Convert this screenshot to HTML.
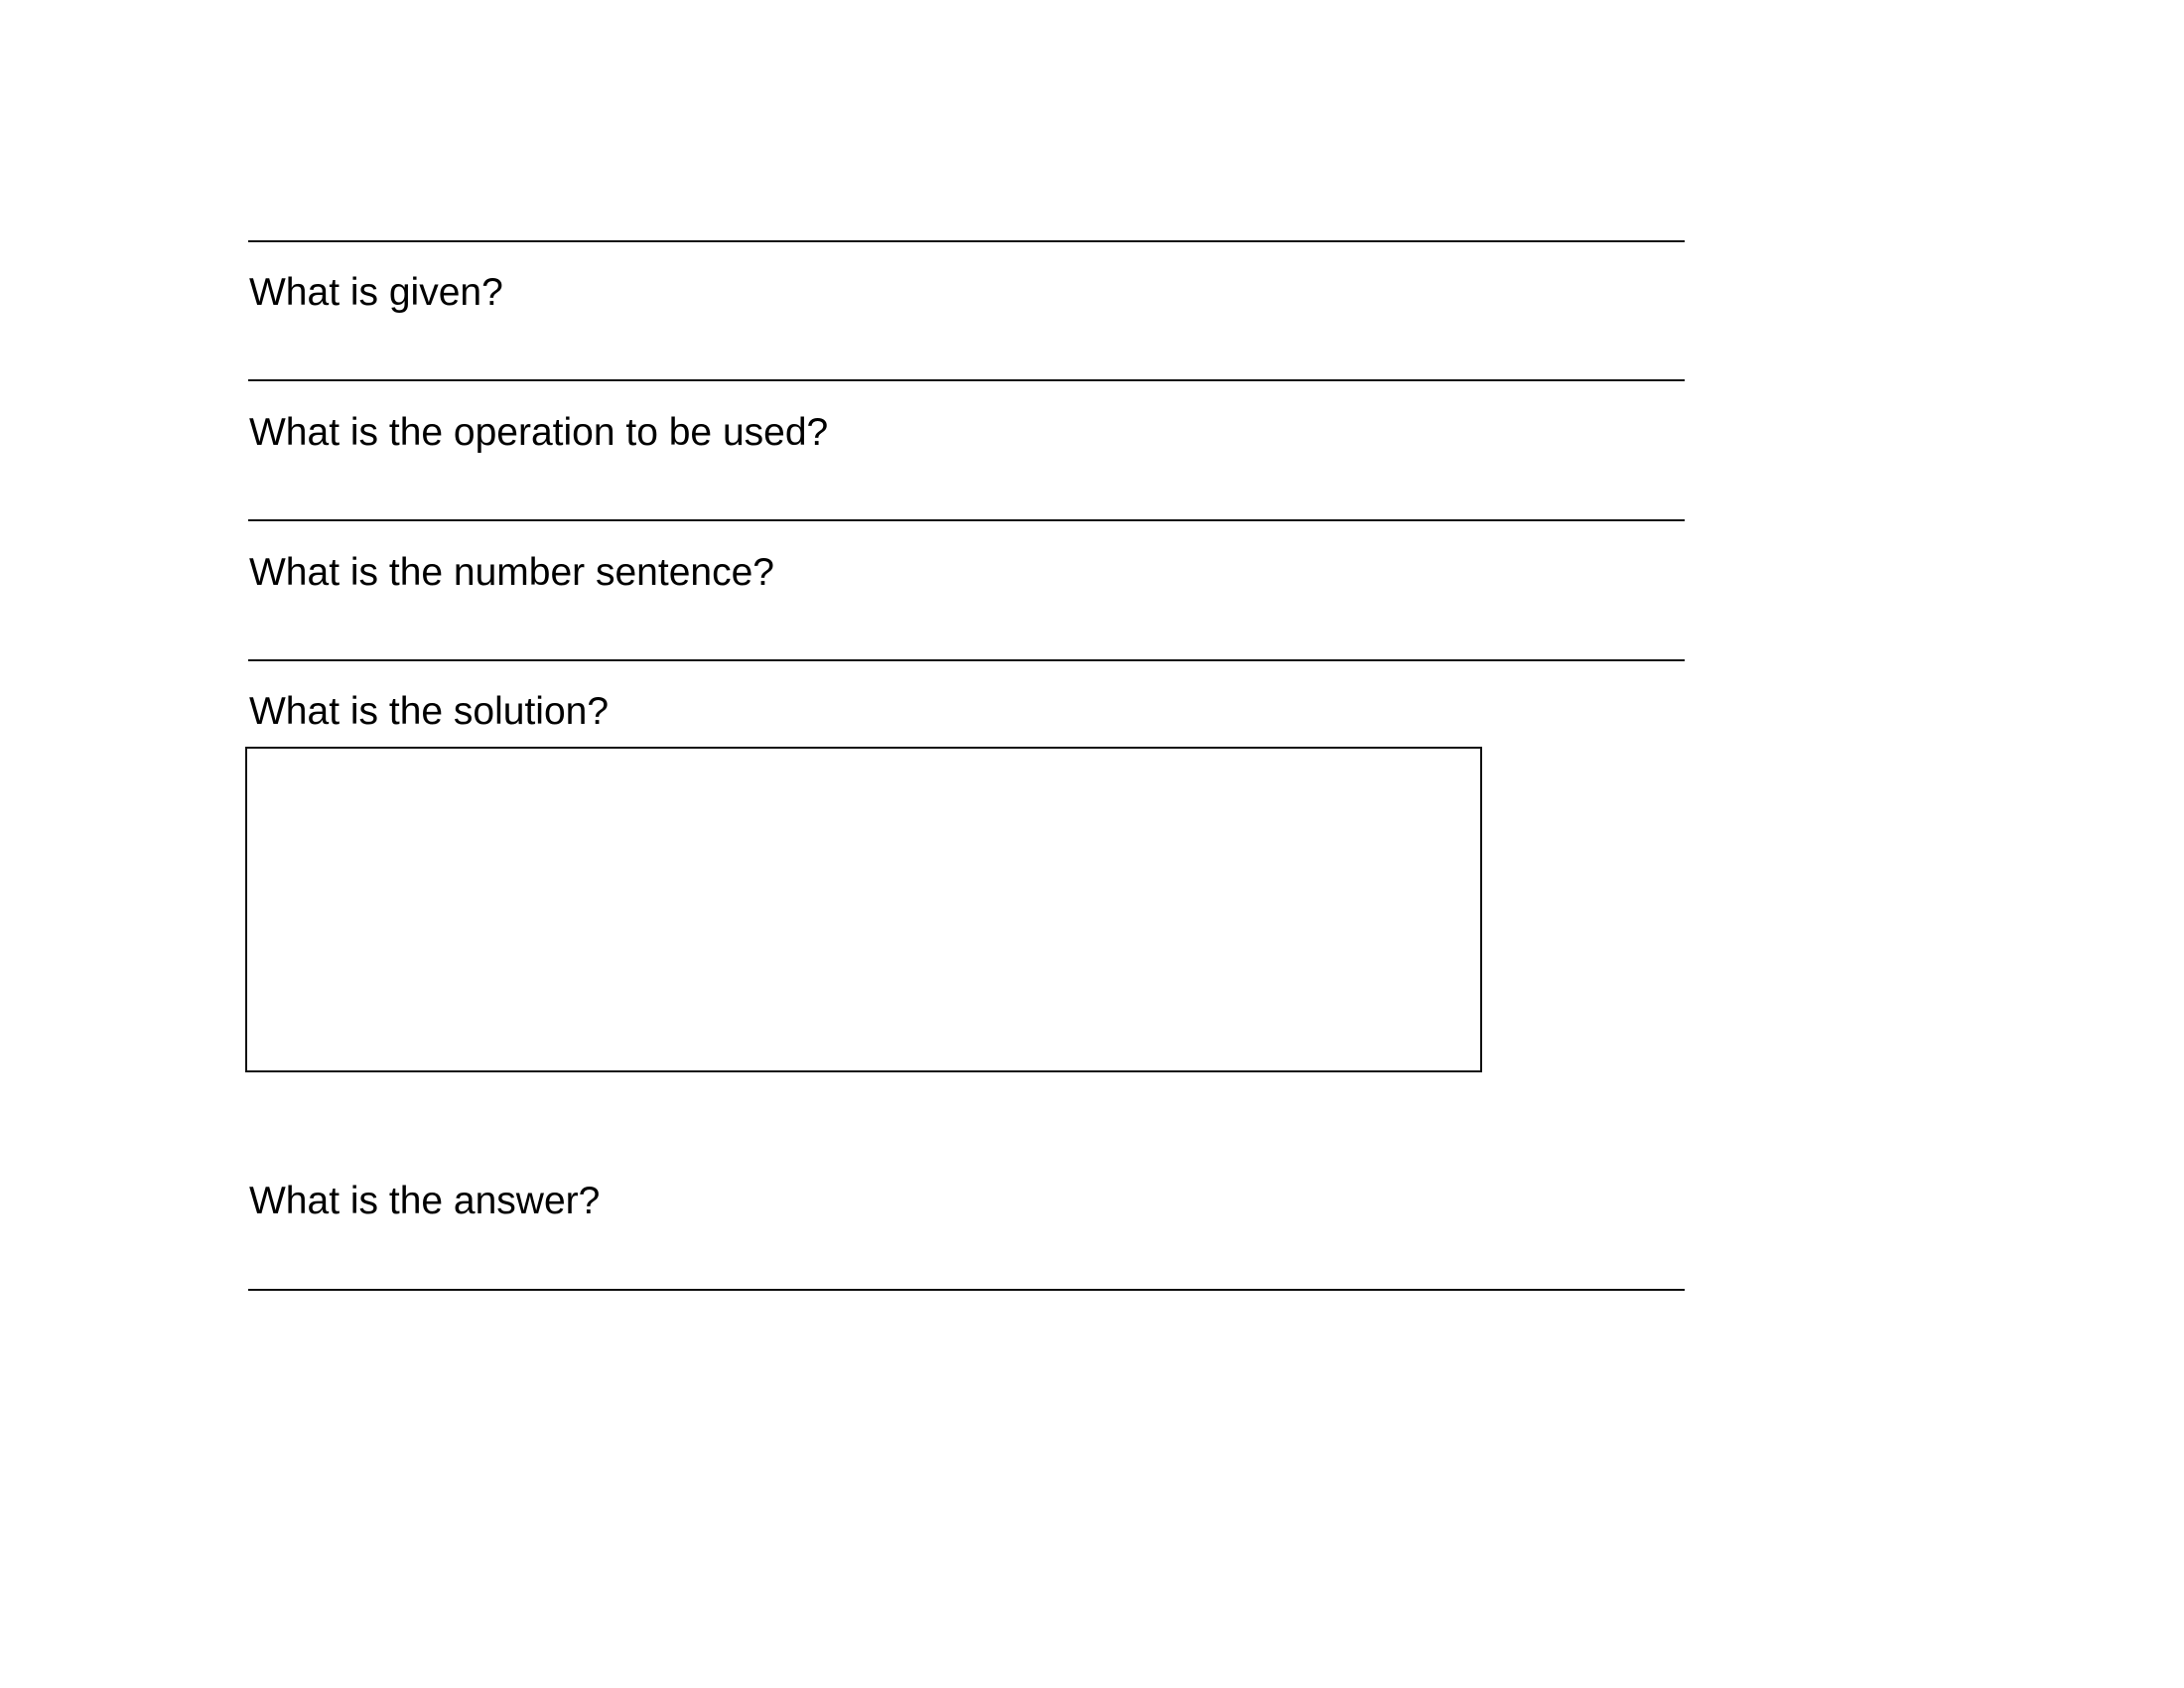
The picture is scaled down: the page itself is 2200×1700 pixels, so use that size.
<!DOCTYPE html>
<html><head><style>
html,body{margin:0;padding:0;background:#fff;width:2200px;height:1700px;overflow:hidden;}
.l{position:absolute;left:250px;width:1447px;height:2px;background:#111;}
.t{position:absolute;left:251px;font-family:"Liberation Sans",Arial,sans-serif;font-size:39px;line-height:39px;color:#000;white-space:nowrap;}
.box{position:absolute;left:247px;top:752px;width:1242px;height:324px;border:2px solid #111;}
</style></head><body>
<div class="l" style="top:242px"></div>
<div class="t" style="top:275px">What is given?</div>
<div class="l" style="top:382px"></div>
<div class="t" style="top:416px">What is the operation to be used?</div>
<div class="l" style="top:523px"></div>
<div class="t" style="top:557px">What is the number sentence?</div>
<div class="l" style="top:664px"></div>
<div class="t" style="top:697px">What is the solution?</div>
<div class="box"></div>
<div class="t" style="top:1190px">What is the answer?</div>
<div class="l" style="top:1298px"></div>
</body></html>
